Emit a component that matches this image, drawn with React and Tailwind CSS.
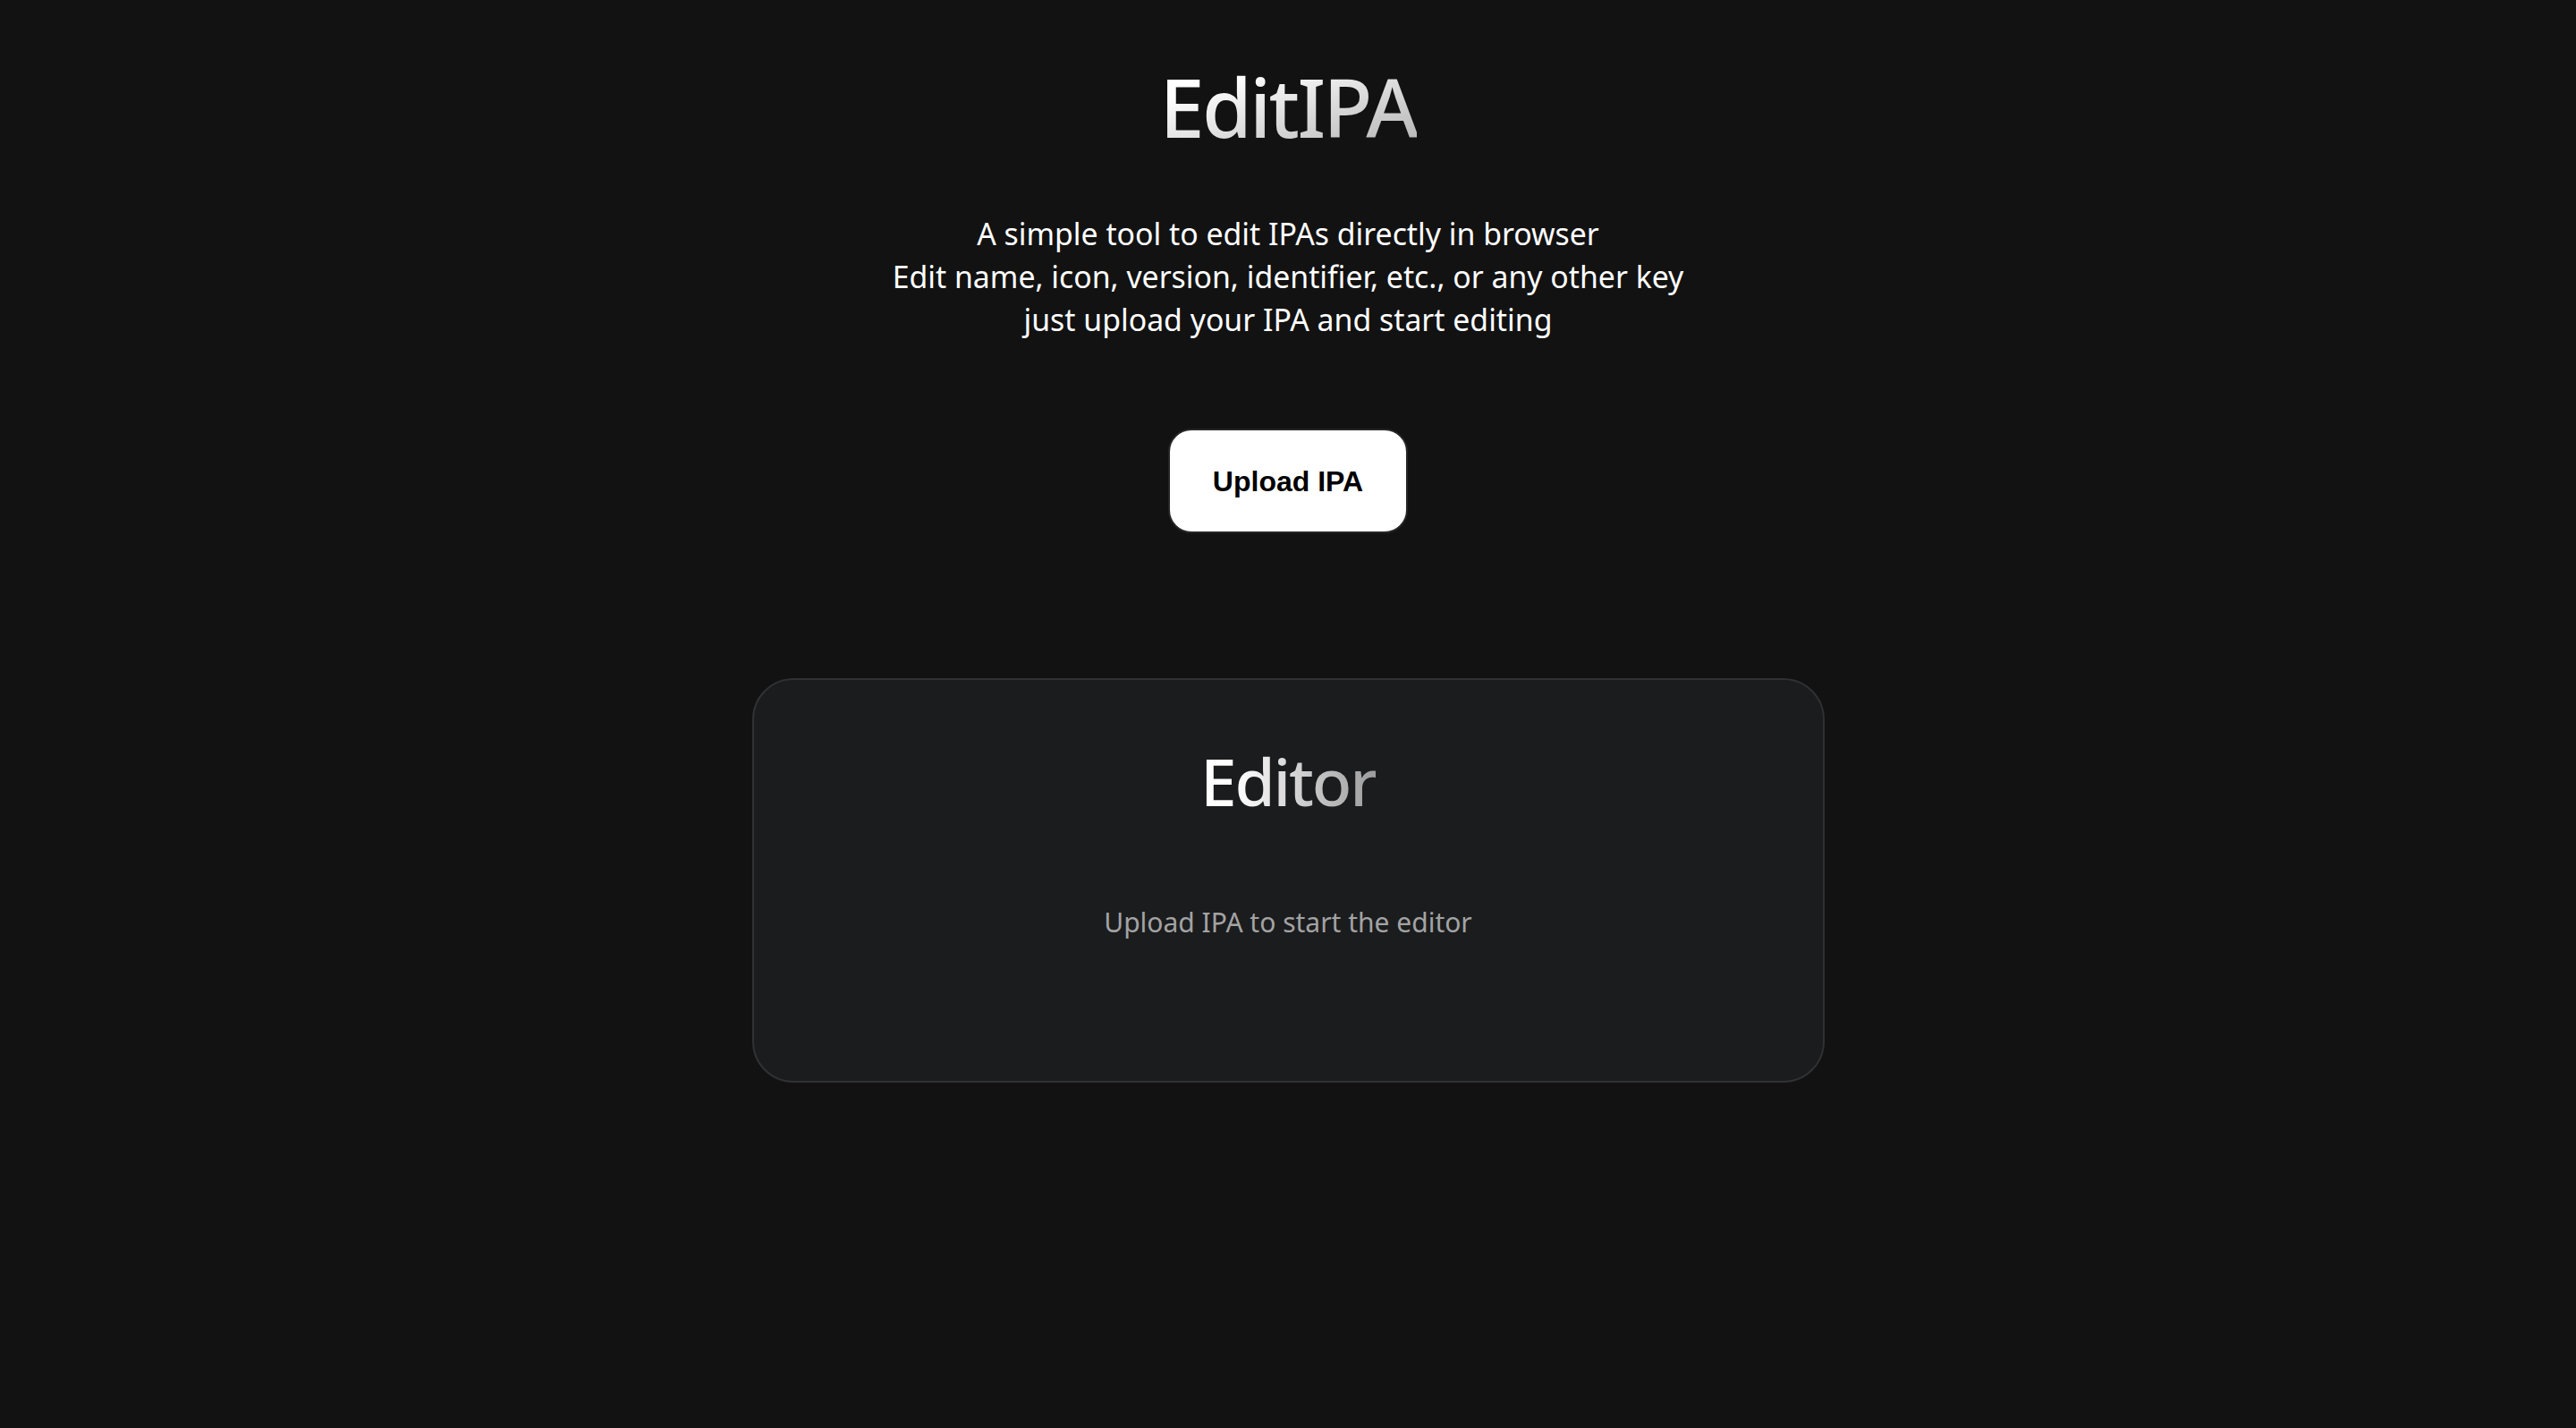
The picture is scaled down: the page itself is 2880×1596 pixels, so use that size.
export default function App() {
  return (
    <div
      className="min-h-screen bg-[#121212] flex flex-col items-center"
      style={{ fontFamily: '"Noto Sans", "Open Sans", sans-serif' }}
    >
      <h1 className="mt-[74px] text-[90px] leading-none font-medium tracking-[-0.03em] bg-gradient-to-br from-white from-20% to-[#b4b4b4] bg-clip-text text-transparent">
        EditIPA
      </h1>
      <p className="mt-[73px] text-[33.8px] leading-[48px] text-white text-center">
        A simple tool to edit IPAs directly in browser
        <br />
        Edit name, icon, version, identifier, etc., or any other key
        <br />
        just upload your IPA and start editing
      </p>
      <button
        className="mt-[98px] w-[268px] h-[117px] rounded-[26px] bg-white text-black text-[32px] font-bold flex items-center justify-center border-2 border-[#262626]"
        style={{ fontFamily: '"Liberation Sans", Arial, sans-serif' }}
      >
        Upload IPA
      </button>
      <div className="mt-[162px] w-[1199px] h-[452px] rounded-[46px] border-2 border-[#303133] bg-[#1b1c1e] flex flex-col items-center">
        <h2 className="mt-[76px] text-[73px] leading-none font-medium tracking-[-0.03em] bg-gradient-to-r from-white from-20% to-[#9c9c9c] bg-clip-text text-transparent">
          Editor
        </h2>
        <p className="mt-[98px] text-[30px] leading-[48px] text-[#a3a3a3]">
          Upload IPA to start the editor
        </p>
      </div>
    </div>
  );
}
